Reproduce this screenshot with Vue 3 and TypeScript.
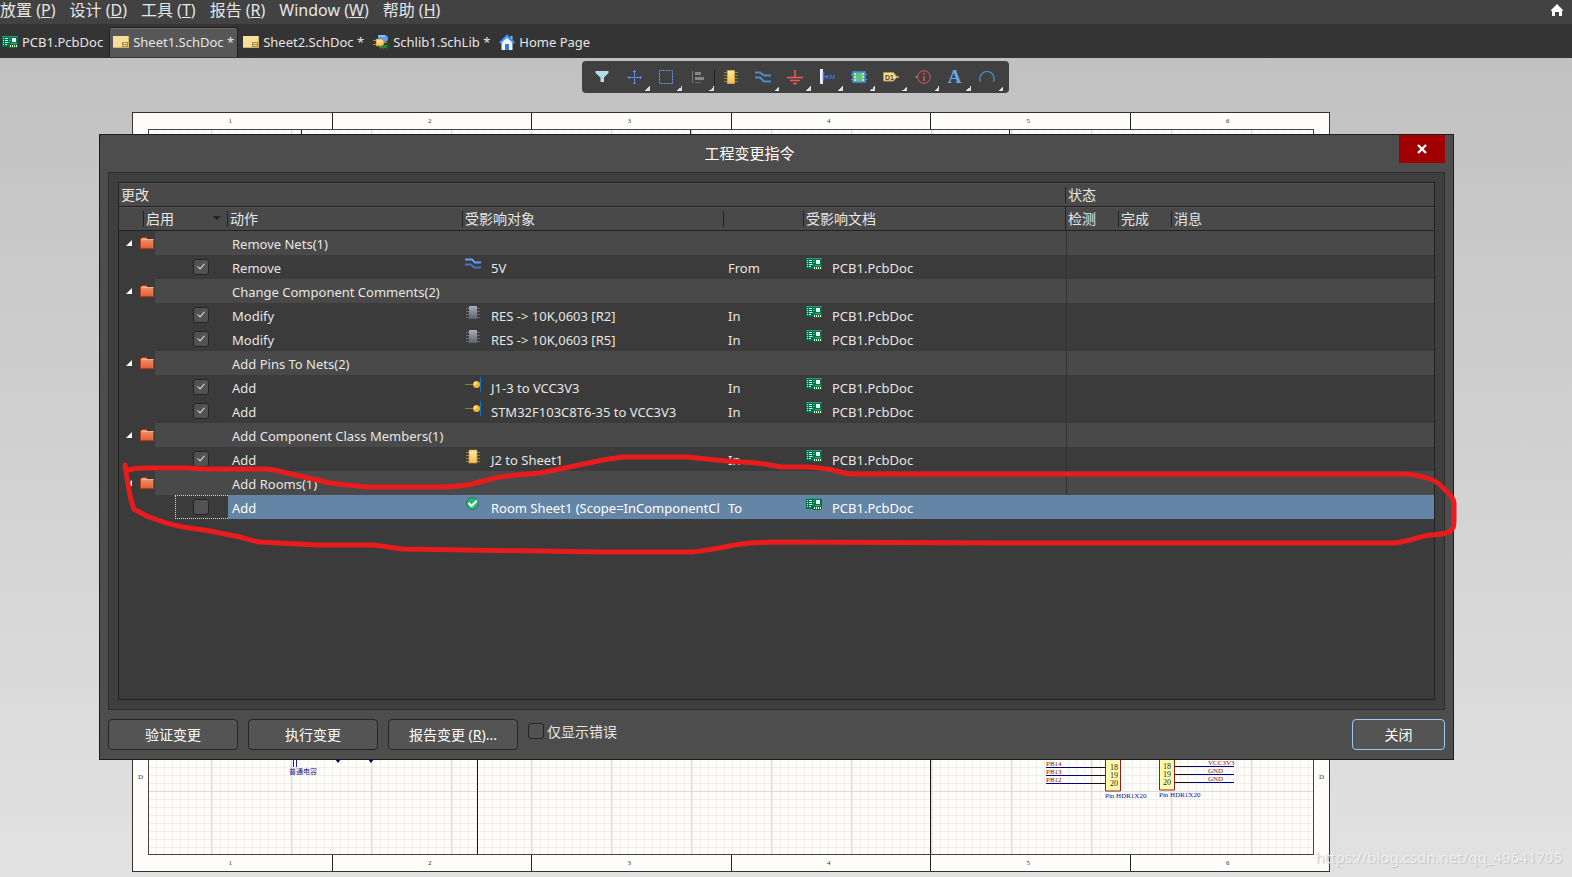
<script setup lang="ts">
import { ref } from 'vue'

type ObjectIcon = 'net' | 'chip' | 'pin' | 'part' | 'room'
interface Change {
  action: string
  icon: ObjectIcon
  object: string
  relation: string
  doc: string
  enabled: boolean
  selected?: boolean
}
interface Group {
  title: string
  changes: Change[]
}

const menus = [
  { label: '放置', key: 'P' },
  { label: '设计', key: 'D' },
  { label: '工具', key: 'T' },
  { label: '报告', key: 'R' },
  { label: 'Window', key: 'W' },
  { label: '帮助', key: 'H' },
]

const tabs = [
  { label: 'PCB1.PcbDoc', icon: 'pcb', active: false },
  { label: 'Sheet1.SchDoc *', icon: 'sheet', active: true },
  { label: 'Sheet2.SchDoc *', icon: 'sheet', active: false },
  { label: 'Schlib1.SchLib *', icon: 'lib', active: false },
  { label: 'Home Page', icon: 'home', active: false },
]

const tools = [
  { id: 'filter', name: 'Filter', more: false },
  { id: 'move', name: 'Move', more: true },
  { id: 'select', name: 'Select', more: true },
  { id: 'align', name: 'Align', more: true },
  { id: 'part', name: 'Part', more: false },
  { id: 'wire', name: 'Wire', more: true },
  { id: 'ground', name: 'Power port', more: true },
  { id: 'bus', name: 'Signal harness', more: true },
  { id: 'symbol', name: 'Sheet symbol', more: true },
  { id: 'port', name: 'Port', more: true },
  { id: 'info', name: 'Directive', more: true },
  { id: 'text', name: 'Text', more: true },
  { id: 'arc', name: 'Arc', more: true },
]

const doc = 'PCB1.PcbDoc'
const groups = ref<Group[]>([
  { title: 'Remove Nets(1)', changes: [{ action: 'Remove', icon: 'net', object: '5V', relation: 'From', doc, enabled: true }] },
  {
    title: 'Change Component Comments(2)',
    changes: [
      { action: 'Modify', icon: 'chip', object: 'RES -> 10K,0603 [R2]', relation: 'In', doc, enabled: true },
      { action: 'Modify', icon: 'chip', object: 'RES -> 10K,0603 [R5]', relation: 'In', doc, enabled: true },
    ],
  },
  {
    title: 'Add Pins To Nets(2)',
    changes: [
      { action: 'Add', icon: 'pin', object: 'J1-3 to VCC3V3', relation: 'In', doc, enabled: true },
      { action: 'Add', icon: 'pin', object: 'STM32F103C8T6-35 to VCC3V3', relation: 'In', doc, enabled: true },
    ],
  },
  { title: 'Add Component Class Members(1)', changes: [{ action: 'Add', icon: 'part', object: 'J2 to Sheet1', relation: 'In', doc, enabled: true }] },
  {
    title: 'Add Rooms(1)',
    changes: [{ action: 'Add', icon: 'room', object: 'Room Sheet1 (Scope=InComponentCl', relation: 'To', doc, enabled: false, selected: true }],
  },
])
const errorsOnly = ref(false)

const pinsLeft = [
  { net: 'PB14', no: 18 },
  { net: 'PB13', no: 19 },
  { net: 'PB12', no: 20 },
]
const pinsRight = [
  { net: 'VCC3V3', no: 18 },
  { net: 'GND', no: 19 },
  { net: 'GND', no: 20 },
]
</script>

<template>
  <div class="app">
    <svg class="defs" width="0" height="0" aria-hidden="true">
      <defs>
        <linearGradient id="gGold" x1="0" y1="0" x2="0" y2="1"><stop offset="0" stop-color="#ffe9a8" /><stop offset="1" stop-color="#f3bf4a" /></linearGradient>
        <linearGradient id="gGrey" x1="0" y1="0" x2="0" y2="1"><stop offset="0" stop-color="#a9afb9" /><stop offset="1" stop-color="#5d636e" /></linearGradient>
        <linearGradient id="gFolder" x1="0" y1="0" x2="0" y2="1"><stop offset="0" stop-color="#f39a70" /><stop offset="1" stop-color="#e05f3a" /></linearGradient>
        <symbol id="i-pcb" viewBox="0 0 16 12">
          <path d="M0 0h16v11h-1v1H7v-1H0z" fill="#00704a" />
          <path d="M0 0h16v1H0z" fill="#2b9a74" />
          <path d="M1 2h1v1H1zM1 4h1v1H1zM1 6h1v1H1zM1 8h1v1H1zM3 2h3v1H3zM3 4h3v1H3zM3 6h3v1H3zM3 8h2v1H3z" fill="#e6f5ec" />
          <path d="M10 2h4v4h-4z" fill="#e9f1ee" />
          <path d="M7 2h2v1H7zM7 4h2v1H7zM6 6h2v1H6zM9 7h6v1H9z" fill="#25b585" />
          <path d="M8 9h1v2H8zM10 9h1v2h-1zM12 9h1v2h-1zM14 9h1v2h-1z" fill="#fff6c4" />
        </symbol>
        <symbol id="i-sheet" viewBox="0 0 16 12">
          <path d="M0 0h16v12H0z" fill="#f7df9b" /><path d="M0 11h16v1H0zM15 0h1v12h-1z" fill="#d6b566" />
          <path d="M9 6h6v5H9z" fill="#a08a4c" /><path d="M10 7h4v1h-4zM10 9h4v1h-4z" fill="#f7df9b" />
        </symbol>
        <symbol id="i-lib" viewBox="0 0 16 16">
          <path d="M5 1h6a4 3.500 0 0 1 0 7H5z" fill="#5c9ff0" /><path d="M6 2h6" stroke="#c3defc" />
          <path d="M6 11h8v3H6z" fill="#258a2c" /><path d="M7.500 14v2M10.500 14v2M13.500 14v2M14 12.500h2M14 10.500h2" stroke="#1e6b24" />
          <path d="M0 6.500h3M0 10.500h3M10 8.500h4" stroke="#b98b2c" />
          <path d="M3 5h6l2 2v3l-2 2H3z" fill="url(#gGold)" stroke="#9b741c" stroke-width=".6" />
        </symbol>
        <symbol id="i-home" viewBox="0 0 16 16">
          <path d="M11.500 2h2v4h-2z" fill="#88b9f0" />
          <path d="M2.500 8L8 3l5.500 5v8h-11z" fill="#eaf4ff" /><path d="M6 10h4v6H6z" fill="#2d80e2" />
          <path d="M.7 9L8 1.700 15.300 9" fill="none" stroke="#3c92f0" stroke-width="2.200" />
        </symbol>
        <symbol id="i-net" viewBox="0 0 16 12">
          <path d="M0 1.500h7l3 3h6" fill="none" stroke="#6aa0ec" stroke-width="1.800" /><path d="M0 6.500h6l3 3h7" fill="none" stroke="#3f73d6" stroke-width="1.800" />
        </symbol>
        <symbol id="i-chip" viewBox="0 0 16 16">
          <path d="M1 3.500h14M1 6.500h14M1 9.500h14M1 12.500h14" stroke="#666d78" /><path d="M4 1h8v13H4z" fill="url(#gGrey)" />
        </symbol>
        <symbol id="i-part" viewBox="0 0 16 16">
          <path d="M1 3.500h14M1 6.500h14M1 9.500h14M1 12.500h14" stroke="#9a8040" /><path d="M4 1h8v13H4z" fill="url(#gGold)" stroke="#c79a3c" stroke-width=".7" />
        </symbol>
        <symbol id="i-pin" viewBox="0 0 16 16">
          <path d="M0 7.500h9" stroke="#8f7a3c" /><path d="M15.500 0v15" stroke="#0a78d0" /><circle cx="11.500" cy="7.500" r="3.500" fill="#f6b52c" /><circle cx="10.500" cy="6.500" r="1.400" fill="#ffe7a0" />
        </symbol>
        <symbol id="i-room" viewBox="0 0 16 16">
          <circle cx="7.500" cy="6.500" r="6" fill="#2fb57c" stroke="#1b7a52" /><path d="M3.500 6l3 3L12 3.500" fill="none" stroke="#fff" stroke-width="2" />
        </symbol>
        <symbol id="i-folder" viewBox="0 0 14 12">
          <path d="M.5 1.500h1l1-1h4l1 2h6v9H.5z" fill="url(#gFolder)" stroke="#b53c16" /><path d="M1.500 2.500h12" stroke="#ffc6a4" stroke-width=".8" />
        </symbol>
      </defs>
    </svg>

    <nav class="menubar">
      <button v-for="m in menus" :key="m.key" type="button" class="menu">{{ m.label }} (<u>{{ m.key }}</u>)</button>
      <button type="button" class="home" aria-label="Home">
        <svg width="12" height="12" viewBox="0 0 12 12"><path d="M6 0l6 6v1h-1v5H8V8H4v4H1V7H0V6z" fill="#fff" /></svg>
      </button>
    </nav>

    <div class="tabs">
      <button v-for="t in tabs" :key="t.label" type="button" class="tab" :class="{ active: t.active }">
        <svg width="16" :height="t.icon === 'pcb' || t.icon === 'sheet' ? 12 : 16"><use :href="'#i-' + t.icon" /></svg>
        <span>{{ t.label }}</span>
      </button>
    </div>

    <main class="workspace">
      <div class="toolbar">
        <button v-for="t in tools" :key="t.id" type="button" class="tool" :class="{ more: t.more, divided: t.id === 'part' }" :aria-label="t.name">
          <span v-if="t.id === 'text'" class="letter">A</span>
          <svg v-else width="16" height="16" viewBox="0 0 16 16" fill="none">
            <path v-if="t.id === 'filter'" d="M1.500 2h13v2L10 8.500V13H6.500V8.500L1.500 4z" fill="#b4dce8" />
            <path v-else-if="t.id === 'move'" d="M8.500 1v14M1.500 8.500h14M7 2.500h3M7 14.500h3M3 7v3M14.500 7v3" stroke="#5c8ae6" />
            <path v-else-if="t.id === 'select'" d="M1.500 1.500h13v13h-13z" stroke="#6c96ee" stroke-dasharray="2 1" />
            <g v-else-if="t.id === 'align'"><path d="M2.500 2v12" stroke="#777" /><path d="M5 3h6v3H5zM5 8h9v3H5z" fill="#858585" /><path d="M5 13.500h6" stroke="#666" /></g>
            <g v-else-if="t.id === 'part'"><path d="M1 3.500h14M1 6.500h14M1 9.500h14M1 12.500h14" stroke="#9a8040" /><path d="M4.500 1.500h7v13h-7z" fill="url(#gGold)" stroke="#d3a649" /></g>
            <path v-else-if="t.id === 'wire'" d="M0 3.500h5l4 3h7M0 8.500h5l4 4h7" stroke="#4d8dc4" stroke-width="2" />
            <path v-else-if="t.id === 'ground'" d="M8 1v7M0 8.500h16M3 11.500h10M6 14.500h4" stroke="#ef5b53" stroke-width="1.500" />
            <g v-else-if="t.id === 'bus'"><path d="M1 0h3v15H1z" fill="#e4efff" /><path d="M4.500 3v9M5 7.500h3M8 10l1-4M11 10l1.500-4M14 10l1.500-4" stroke="#3f74e0" stroke-width="1.500" /></g>
            <g v-else-if="t.id === 'symbol'"><path d="M2 3h12v10H2z" fill="#57c78a" stroke="#4f8fe6" stroke-width="1.500" /><path d="M0 5.500h4M0 10.500h4M12 5.500h4M12 10.500h4" stroke="#4f8fe6" /><path d="M3 5h2M3 8h2M3 11h2M11 5h2M11 8h2M11 11h2" stroke="#f6ec7c" stroke-width="1.500" /></g>
            <g v-else-if="t.id === 'port'"><path d="M.5 3.500h10l3.500 4.500-3.500 4H.5z" fill="#f5dc96" stroke="#b99543" /><path d="M13 8h3" stroke="#d9b25c" stroke-width="1.500" /><text x="2" y="11" class="port-label">D1</text></g>
            <g v-else-if="t.id === 'info'"><circle cx="9" cy="8" r="6.300" stroke="#e8565b" /><path d="M0 8h3M9 7v5" stroke="#e8565b" stroke-width="1.500" /><path d="M9 4v1.500" stroke="#e8565b" stroke-width="1.500" /></g>
            <path v-else d="M1.500 13C-.5 7.500 3 2.500 8 2.500S16.500 7.500 14.500 13" stroke="#4f8fd0" stroke-width="1.200" />
          </svg>
        </button>
      </div>

      <div class="sheet">
        <div class="ruler top"><span v-for="n in 6" :key="n">{{ n }}</span></div>
        <div class="middle">
          <div class="side">D</div>
          <div class="drawing">
            <svg class="grid" width="100%" height="100%">
              <defs>
                <pattern id="minor" width="8" height="8" patternUnits="userSpaceOnUse" x="-1" y="5"><path d="M.5 0v8M0 .5h8" stroke="#efefec" /></pattern>
                <pattern id="major" width="80" height="80" patternUnits="userSpaceOnUse" x="62" y="21"><path d="M.5 0v80M0 .5h80" stroke="#dcdbd8" /></pattern>
              </defs>
              <rect width="100%" height="100%" fill="url(#minor)" />
              <rect width="100%" height="100%" fill="url(#major)" />
              <path d="M152.500 0v30M541.500 0v30M860.500 0v30M328.500 600v130M781.500 600v130" stroke="#1a1a1a" />
              <path d="M144.500 618v19M147.500 618v19" stroke="#1a1ad8" />
              <path d="M186 629h6l-3 4zM219 629h6l-3 4z" fill="#00007a" />
              <text x="140" y="644" class="cjk">普通电容</text>
              <g class="pins">
                <path d="M956.500 600h15v61h-15zM1010.500 600h15v60h-15z" fill="#fffbab" stroke="#8d2020" />
                <g v-for="(p, i) in pinsLeft" :key="'l' + i">
                  <path :d="`M897 ${637.5 + i * 8}h42`" stroke="#00008b" /><path :d="`M939 ${637.5 + i * 8}h17`" stroke="#111" />
                  <text x="897" :y="636 + i * 8" class="net">{{ p.net }}</text>
                  <text x="961" :y="640 + i * 8">{{ p.no }}</text>
                </g>
                <g v-for="(p, i) in pinsRight" :key="'r' + i">
                  <path :d="`M1042 ${636.5 + i * 8}h43`" stroke="#00008b" /><path :d="`M1026 ${636.5 + i * 8}h16`" stroke="#111" />
                  <text x="1059" :y="635 + i * 8" class="net">{{ p.net }}</text>
                  <text x="1014" :y="639 + i * 8">{{ p.no }}</text>
                </g>
                <text x="956" y="668" class="part">Pin HDR1X20</text>
                <text x="1010" y="667" class="part">Pin HDR1X20</text>
              </g>
            </svg>
          </div>
          <div class="side">D</div>
        </div>
        <div class="ruler bottom"><span v-for="n in 6" :key="n">{{ n }}</span></div>
      </div>

      <section class="dialog" role="dialog" aria-labelledby="dialog-title">
        <header class="titlebar">
          <h1 id="dialog-title">工程变更指令</h1>
          <button type="button" class="close" aria-label="Close">
            <svg width="10" height="10" viewBox="0 0 10 10"><path d="M1 1l8 8M9 1L1 9" stroke="#fff" stroke-width="2.400" /></svg>
          </button>
        </header>

        <div class="panel">
          <div class="listing">
            <table>
              <colgroup>
                <col class="c-tree" /><col class="c-indent" /><col class="c-check" /><col class="c-action" /><col class="c-object" />
                <col class="c-rel" /><col class="c-doc" /><col class="c-status" /><col class="c-status" /><col />
              </colgroup>
              <thead>
                <tr><th colspan="7">更改</th><th colspan="3" class="sep">状态</th></tr>
                <tr>
                  <th></th>
                  <th colspan="2" class="sep sorted">启用</th>
                  <th class="sep">动作</th>
                  <th class="sep">受影响对象</th>
                  <th class="sep"></th>
                  <th class="sep">受影响文档</th>
                  <th class="sep full">检测</th>
                  <th class="sep">完成</th>
                  <th class="sep">消息</th>
                </tr>
              </thead>
              <tbody v-for="g in groups" :key="g.title">
                <tr class="group">
                  <td colspan="2" class="tree">
                    <div class="node">
                      <svg width="6" height="6" viewBox="0 0 6 6"><path d="M6 0v6H0z" fill="#fff" /></svg>
                      <svg width="14" height="12"><use href="#i-folder" /></svg>
                    </div>
                  </td>
                  <td></td>
                  <td colspan="4" class="text">{{ g.title }}</td>
                  <td colspan="3" class="status"></td>
                </tr>
                <tr v-for="(c, i) in g.changes" :key="i" :class="{ selected: c.selected }">
                  <td colspan="2" class="tree"></td>
                  <td class="enable"><div class="tickcell"><input v-model="c.enabled" type="checkbox" :aria-label="c.action + ' ' + c.object" /></div></td>
                  <td class="text">{{ c.action }}</td>
                  <td>
                    <div class="object"><svg width="16" :height="c.icon === 'net' ? 12 : 16" :class="{ low: c.icon === 'net' }"><use :href="'#i-' + c.icon" /></svg><span>{{ c.object }}</span></div>
                  </td>
                  <td class="text">{{ c.relation }}</td>
                  <td>
                    <div class="object"><svg width="16" height="12" class="low"><use href="#i-pcb" /></svg><span>{{ c.doc }}</span></div>
                  </td>
                  <td colspan="3" class="status"></td>
                </tr>
              </tbody>
            </table>
          </div>
        </div>

        <footer class="actions">
          <button type="button" class="btn">验证变更</button>
          <button type="button" class="btn">执行变更</button>
          <button type="button" class="btn">报告变更 (<u>R</u>)...</button>
          <label class="only"><input v-model="errorsOnly" type="checkbox" /><span>仅显示错误</span></label>
          <button type="button" class="btn primary">关闭</button>
        </footer>
      </section>
    </main>

    <svg class="ink" width="1572" height="877" viewBox="0 0 1572 877" aria-hidden="true">
      <path
        d="M125 465C126 472 127 479 128 483C129 492 131 501 134 509C139 512 146 516 152 518C162 522 172 525 183 527L210 531L240 537C247 539 253 541 260 542L317 545L373 545C383 546 393 548 403 549L600 552H693C703 551 711 549 720 548C732 545 740 544 750 543L773 542L1000 543H1392C1400 543 1404 541 1410 540C1417 538 1423 536 1430 535C1436 534 1444 535 1449 532C1454 529 1454 525 1454 520V503C1453 497 1450 494 1445 490C1441 485 1436 481 1430 479C1421 476 1412 474 1403 474H850C842 473 835 470 827 469C820 468 813 467 807 467L783 467C774 466 766 464 757 463L727 461L687 457H623C616 458 610 459 603 460L560 469L540 473C527 474 513 475 500 477C489 479 478 483 467 485C459 486 451 487 443 487H367L347 485L330 483L300 476C289 474 278 470 267 469H203L187 468H143C138 468 132 469 128 470"
        fill="none" stroke="#e81c1c" stroke-width="5" stroke-linecap="round" stroke-linejoin="round"
      />
    </svg>
    <a class="credit" href="https://blog.csdn.net/qq_49641705">https://blog.csdn.net/qq_49641705</a>
  </div>
</template>

<style>
body {
  margin: 0;
}
</style>

<style scoped>
.app {
  position: relative;
  display: flex;
  flex-direction: column;
  min-height: 100vh;
  overflow: hidden;
  color: #e6e6e6;
  font: 13px/24px 'Noto Sans', 'Noto Sans CJK SC', sans-serif;
}
* {
  box-sizing: border-box;
}
button {
  font: inherit;
  color: inherit;
  background: none;
  border: 0;
  padding: 0;
}
svg {
  display: block;
  flex: none;
}
.defs,
.ink {
  position: absolute;
  top: 0;
  left: 0;
  pointer-events: none;
}
.menubar {
  display: flex;
  align-items: flex-start;
  gap: 14px;
  height: 24px;
  background: #424242;
  font-size: 16px;
  line-height: 20px;
}
.menu {
  white-space: nowrap;
}
.home {
  margin: 4px 9px 0 auto;
}
.tabs {
  display: flex;
  align-items: flex-end;
  gap: 1px;
  height: 34px;
  padding-bottom: 1px;
  background: #343434;
}
.tab {
  display: flex;
  align-items: center;
  gap: 4px;
  height: 30px;
  padding: 0 3px 2px;
  border: 1px solid transparent;
  border-bottom: 0;
  border-radius: 3px 3px 0 0;
  white-space: nowrap;
}
.tab:first-child {
  padding: 0 4px 2px 1px;
}
.tab.active {
  background: #575757;
  border-color: #222;
  box-shadow: inset 0 1px #6a6a6a;
}
.workspace {
  position: relative;
  flex: 1;
  overflow: hidden;
  background: linear-gradient(#c1c1c1, #e2e2e2);
}
.toolbar {
  position: relative;
  display: flex;
  width: max-content;
  margin: 3px auto 0;
  padding: 0 6px 0 4px;
  left: 9px;
  background: #404040;
  border-radius: 4px;
}
.tool {
  position: relative;
  display: grid;
  place-items: center;
  width: 32px;
  height: 32px;
}
.tool.more::after {
  content: '';
  position: absolute;
  right: 0;
  bottom: 2px;
  width: 5px;
  height: 5px;
  background: linear-gradient(135deg, transparent 50%, #dcdcdc 50%);
}
.tool.divided {
  margin-left: 1px;
}
.tool.divided::before {
  content: '';
  position: absolute;
  left: -1px;
  top: 8px;
  width: 1px;
  height: 16px;
  background: #222;
}
.letter {
  font: bold 19px/24px 'Liberation Serif', serif;
  color: #65a5e8;
}
.port-label {
  font: bold 7px 'Liberation Sans', sans-serif;
  fill: #5e4612;
}
.sheet {
  position: absolute;
  left: 132px;
  right: 242px;
  top: 54px;
  height: 760px;
  display: flex;
  flex-direction: column;
  background: #fffdf9;
  border: 1px solid #333;
  color: #333;
  font: 7px/17px 'Liberation Serif', serif;
}
.ruler {
  display: flex;
  height: 16px;
}
.ruler span {
  flex: 1;
  padding-right: 4px;
  text-align: center;
}
.ruler span + span {
  border-left: 1px solid #222;
}
.middle {
  flex: 1;
  display: flex;
}
.side {
  display: flex;
  align-items: flex-end;
  justify-content: center;
  width: 15px;
  padding-bottom: 69px;
}
.drawing {
  flex: 1;
  position: relative;
  overflow: hidden;
  border: 1px solid #444;
}
.grid {
  position: absolute;
  inset: 0;
}
.cjk {
  font: 7px 'Noto Sans CJK SC', sans-serif;
  fill: #1c1c8c;
}
.pins {
  font: 8px 'Liberation Serif', serif;
  fill: #222;
}
.net {
  font-size: 7px;
  fill: #8b1414;
}
.part {
  font-size: 7px;
  fill: #14148b;
}
.dialog {
  position: absolute;
  left: 99px;
  right: 118px;
  top: 76px;
  padding: 0 8px 9px;
  background: #4d4d4d;
  border: 1px solid #1c1c1c;
}
.titlebar {
  position: relative;
  display: flex;
  justify-content: center;
  height: 37px;
  padding-right: 54px;
}
.titlebar h1 {
  margin: 0;
  font-size: 15px;
  font-weight: 400;
  line-height: 36px;
  color: #fff;
}
.close {
  position: absolute;
  top: 0;
  right: 0;
  display: grid;
  place-items: center;
  width: 46px;
  height: 28px;
  background: #a00000;
}
.panel {
  padding: 9px;
  background: #3f3f3f;
  border: 1px solid #2c2c2c;
}
.listing {
  min-height: 518px;
  background: #3b3b3b;
  border: 1px solid #222;
}
table {
  width: 100%;
  table-layout: fixed;
  border-collapse: separate;
  border-spacing: 0;
}
.c-tree { width: 25px; }
.c-indent { width: 11px; }
.c-check { width: 73px; }
.c-action { width: 235px; }
.c-object { width: 261px; }
.c-rel { width: 80px; }
.c-doc { width: 262px; }
.c-status { width: 53px; }
th,
td {
  height: 24px;
  padding: 0;
  text-align: left;
  font-weight: 400;
  white-space: nowrap;
}
th {
  position: relative;
  padding-left: 2px;
  font-size: 14px;
  line-height: 23px;
  background: #494949;
  border-bottom: 1px solid #222;
  box-shadow: inset 0 1px #535353;
}
.sep::before {
  content: '';
  position: absolute;
  left: -1px;
  top: 4px;
  width: 1px;
  height: 16px;
  background: #222;
}
.sep.full::before {
  top: 0;
  height: 24px;
}
.sorted::after {
  content: '';
  position: absolute;
  right: 7px;
  top: 9px;
  border: 4px solid transparent;
  border-top-color: #222;
  border-bottom: 0;
}
.group td {
  background: #494949;
}
.group td.tree {
  background: #3b3b3b;
}
td.text {
  padding: 2px 0 0 4px;
  line-height: 22px;
}
.node {
  display: flex;
  align-items: center;
  gap: 8px;
  height: 24px;
  padding-left: 7px;
}
.status {
  border-left: 1px solid #333;
}
.object {
  display: flex;
  gap: 10px;
  height: 24px;
  padding-left: 2px;
  line-height: 26px;
  overflow: hidden;
}
.object svg {
  margin-top: 2px;
}
.object svg.low {
  margin-top: 3px;
}
.tickcell {
  display: flex;
  height: 24px;
  margin-left: 20px;
  padding: 4px 0 0 18px;
}
input {
  appearance: none;
  position: relative;
  flex: none;
  width: 16px;
  height: 16px;
  margin: 0;
  background: #525252;
  border: 1px solid #242424;
  border-radius: 3px;
}
input:checked::after {
  content: '';
  position: absolute;
  left: 5px;
  top: 2px;
  width: 3px;
  height: 6px;
  border: solid #dedede;
  border-width: 0 1px 1px 0;
  transform: rotate(42deg);
}
.selected td {
  background: #6485a5;
  color: #fff;
}
.selected td.tree,
.selected td.enable {
  background: #3b3b3b;
}
.selected .status {
  border-left-color: #6485a5;
}
.selected .tickcell {
  padding: 3px 0 0 17px;
  border: 1px dotted #d8d8d8;
  border-right: 0;
}
.actions {
  display: flex;
  gap: 10px;
  margin-top: 9px;
}
.btn {
  width: 130px;
  height: 31px;
  font-size: 14px;
  color: #fff;
  background: #545454;
  border: 1px solid #242424;
  border-radius: 4px;
}
.only {
  display: flex;
  gap: 3px;
  font-size: 14px;
  padding-top: 4px;
  line-height: 18px;
}
.primary {
  width: 93px;
  margin-left: auto;
  border-color: #9cc8f4;
}
.credit {
  position: absolute;
  right: 10px;
  bottom: 8px;
  font-size: 15px;
  color: #efefef;
  text-decoration: none;
  text-shadow: 1px 1px 1px #c0c0c0;
}
</style>
